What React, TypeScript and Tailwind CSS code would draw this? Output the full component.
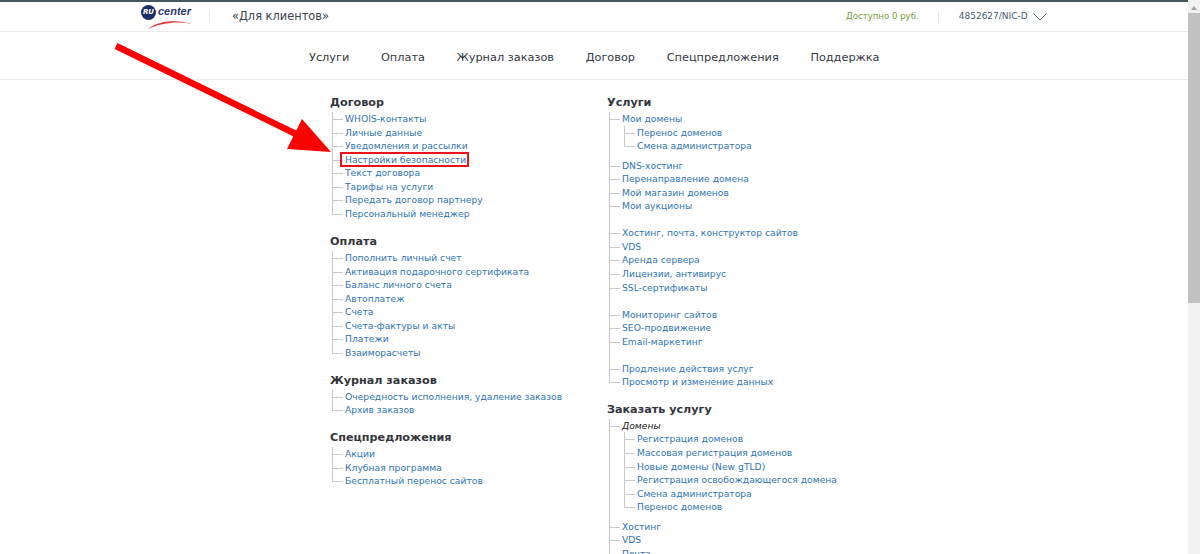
const font = "font-['DejaVu_Sans','Verdana',sans-serif]";

type Row = { label: string; italic?: boolean; boxed?: boolean; children?: string[] };

const dogovor: Row[] = [
  { label: "WHOIS-контакты" },
  { label: "Личные данные" },
  { label: "Уведомления и рассылки" },
  { label: "Настройки безопасности", boxed: true },
  { label: "Текст договора" },
  { label: "Тарифы на услуги" },
  { label: "Передать договор партнеру" },
  { label: "Персональный менеджер" },
];

const oplata: Row[] = [
  { label: "Пополнить личный счет" },
  { label: "Активация подарочного сертификата" },
  { label: "Баланс личного счета" },
  { label: "Автоплатеж" },
  { label: "Счета" },
  { label: "Счета-фактуры и акты" },
  { label: "Платежи" },
  { label: "Взаиморасчеты" },
];

const journal: Row[] = [
  { label: "Очередность исполнения, удаление заказов" },
  { label: "Архив заказов" },
];

const offers: Row[] = [
  { label: "Акции" },
  { label: "Клубная программа" },
  { label: "Бесплатный перенос сайтов" },
];

const services: (Row | null)[] = [
  { label: "Мои домены", children: ["Перенос доменов", "Смена администратора"] },
  { label: "DNS-хостинг" },
  { label: "Перенаправление домена" },
  { label: "Мой магазин доменов" },
  { label: "Мои аукционы" },
  null,
  { label: "Хостинг, почта, конструктор сайтов" },
  { label: "VDS" },
  { label: "Аренда сервера" },
  { label: "Лицензии, антивирус" },
  { label: "SSL-сертификаты" },
  null,
  { label: "Мониторинг сайтов" },
  { label: "SEO-продвижение" },
  { label: "Email-маркетинг" },
  null,
  { label: "Продление действия услуг" },
  { label: "Просмотр и изменение данных" },
];

const order: Row[] = [
  {
    label: "Домены",
    italic: true,
    children: [
      "Регистрация доменов",
      "Массовая регистрация доменов",
      "Новые домены (New gTLD)",
      "Регистрация освобождающегося домена",
      "Смена администратора",
      "Перенос доменов",
    ],
  },
  { label: "Хостинг" },
  { label: "VDS" },
  { label: "Почта" },
];

function Tick({ last }: { last: boolean }) {
  return (
    <>
      <span className={`absolute left-0 top-0 w-px bg-[#c9c9c9] ${last ? "h-[7px]" : "h-full"}`} />
      <span className="absolute left-0 top-[7px] h-px w-[11px] bg-[#c9c9c9]" />
    </>
  );
}

function TreeRow({ row, last }: { row: Row; last: boolean }) {
  return (
    <li className={`relative pl-[13px] ${row.children ? "pb-[6px]" : ""}`}>
      <Tick last={last} />
      {row.italic ? (
        <span className="block h-[13.55px] text-[#222] italic">{row.label}</span>
      ) : (
        <a className="relative block h-[13.55px] text-[#2f74b0]">
          {row.label}
          {row.boxed && (
            <span className="absolute -left-[5px] -top-[1px] h-[15px] w-[129px] border-2 border-[#e8141c]" />
          )}
        </a>
      )}
      {row.children && (
        <ul className="ml-[2px]">
          {row.children.map((c, i) => (
            <li key={c} className="relative pl-[13px]">
              <Tick last={i === row.children!.length - 1} />
              <a className="block h-[13.55px] text-[#2f74b0]">{c}</a>
            </li>
          ))}
        </ul>
      )}
    </li>
  );
}

function Section({ title, rows, className = "" }: { title: string; rows: (Row | null)[]; className?: string }) {
  return (
    <section className={className}>
      <h2 className="h-[17px] text-[11.2px] leading-[16px] font-bold text-[#33363b]">{title}</h2>
      <ul className="ml-[2px]">
        {rows.map((r, i) =>
          r ? (
            <TreeRow key={r.label} row={r} last={i === rows.length - 1} />
          ) : (
            <li key={i} className="relative h-[13.55px]">
              <span className="absolute left-0 top-0 h-full w-px bg-[#c9c9c9]" />
            </li>
          ),
        )}
      </ul>
    </section>
  );
}

function Logo() {
  return (
    <div className="relative h-[26px] w-[51px]">
      <div className="flex items-center gap-[2px] pt-[1px]">
        <span className="flex h-[15px] w-[15px] items-center justify-center rounded-full bg-[#1c2f66] text-[7px] font-bold text-white italic">
          RU
        </span>
        <span className="font-['Liberation_Sans',sans-serif] -mt-[2px] text-[11px] leading-[14px] font-bold text-[#2a3a6c] italic">
          center
        </span>
      </div>
      <svg className="absolute top-[14px] left-[6px]" width="46" height="12" viewBox="0 0 46 12">
        <path d="M1 11 C10 3 30 1 45 6 C30 3 14 5 1 11 Z" fill="#e2352b" />
      </svg>
    </div>
  );
}

function Arrow() {
  return (
    <svg className="pointer-events-none absolute top-0 left-0" width="400" height="200" viewBox="0 0 400 200">
      <line x1="116" y1="44" x2="300" y2="134" stroke="#ff0000" stroke-width="6.5" />
      <polygon points="302,117 331,150 287,147" fill="#ff0000" />
    </svg>
  );
}

export default function App() {
  const nav = ["Услуги", "Оплата", "Журнал заказов", "Договор", "Спецпредложения", "Поддержка"];
  return (
    <div className={`flex h-[554px] w-[1200px] overflow-hidden bg-white ${font}`}>
      <div className="relative w-[1188px] border-t-2 border-[#44595f]">
        <header className="flex h-[29px] items-center pl-[141px]">
          <Logo />
          <div className="ml-[17px] h-[11px] w-px bg-[#e6e6e6]" />
          <span className="ml-[22px] pt-[1px] text-[11.4px] text-[#3a4450]">«Для клиентов»</span>
          <span className="ml-[517px] text-[8.6px] text-[#7c9a3c]">Доступно 0 руб.</span>
          <div className="ml-[19px] h-[11px] w-px bg-[#e6e6e6]" />
          <span className="ml-[20px] text-[9px] text-[#4a5a70]">4852627/NIC-D</span>
          <svg className="ml-[5px]" width="14" height="8" viewBox="0 0 14 8" fill="none" stroke="#4a5a70" stroke-width="0.8">
            <path d="M0.5 0.5 L7 7 L13.5 0.5" />
          </svg>
        </header>
        <nav className="flex h-[49px] items-center gap-[31.7px] border-y border-[#ebebeb] pt-[5px] pl-[309px] text-[11.3px] text-[#33393f]">
          {nav.map((n) => (
            <span key={n}>{n}</span>
          ))}
        </nav>
        <main className="flex pt-[15px] text-[9.2px] leading-[13.6px]">
          <div className="ml-[330px] w-[277px]">
            <Section title="Договор" rows={dogovor} />
            <Section title="Оплата" rows={oplata} className="mt-[13.6px]" />
            <Section title="Журнал заказов" rows={journal} className="mt-[13.6px]" />
            <Section title="Спецпредложения" rows={offers} className="mt-[13px]" />
          </div>
          <div>
            <Section title="Услуги" rows={services} />
            <Section title="Заказать услугу" rows={order} className="mt-[13px]" />
          </div>
        </main>
        <Arrow />
      </div>
      <aside className="flex w-[12px] flex-col bg-[#f1f1f1]">
        <div className="flex h-[13px] items-center justify-center pt-[2px]">
          <span className="h-0 w-0 border-x-[3.5px] border-b-[4px] border-x-transparent border-b-[#a3a3a3]" />
        </div>
        <div className="h-[290px] bg-[#c1c1c1]" />
      </aside>
    </div>
  );
}
